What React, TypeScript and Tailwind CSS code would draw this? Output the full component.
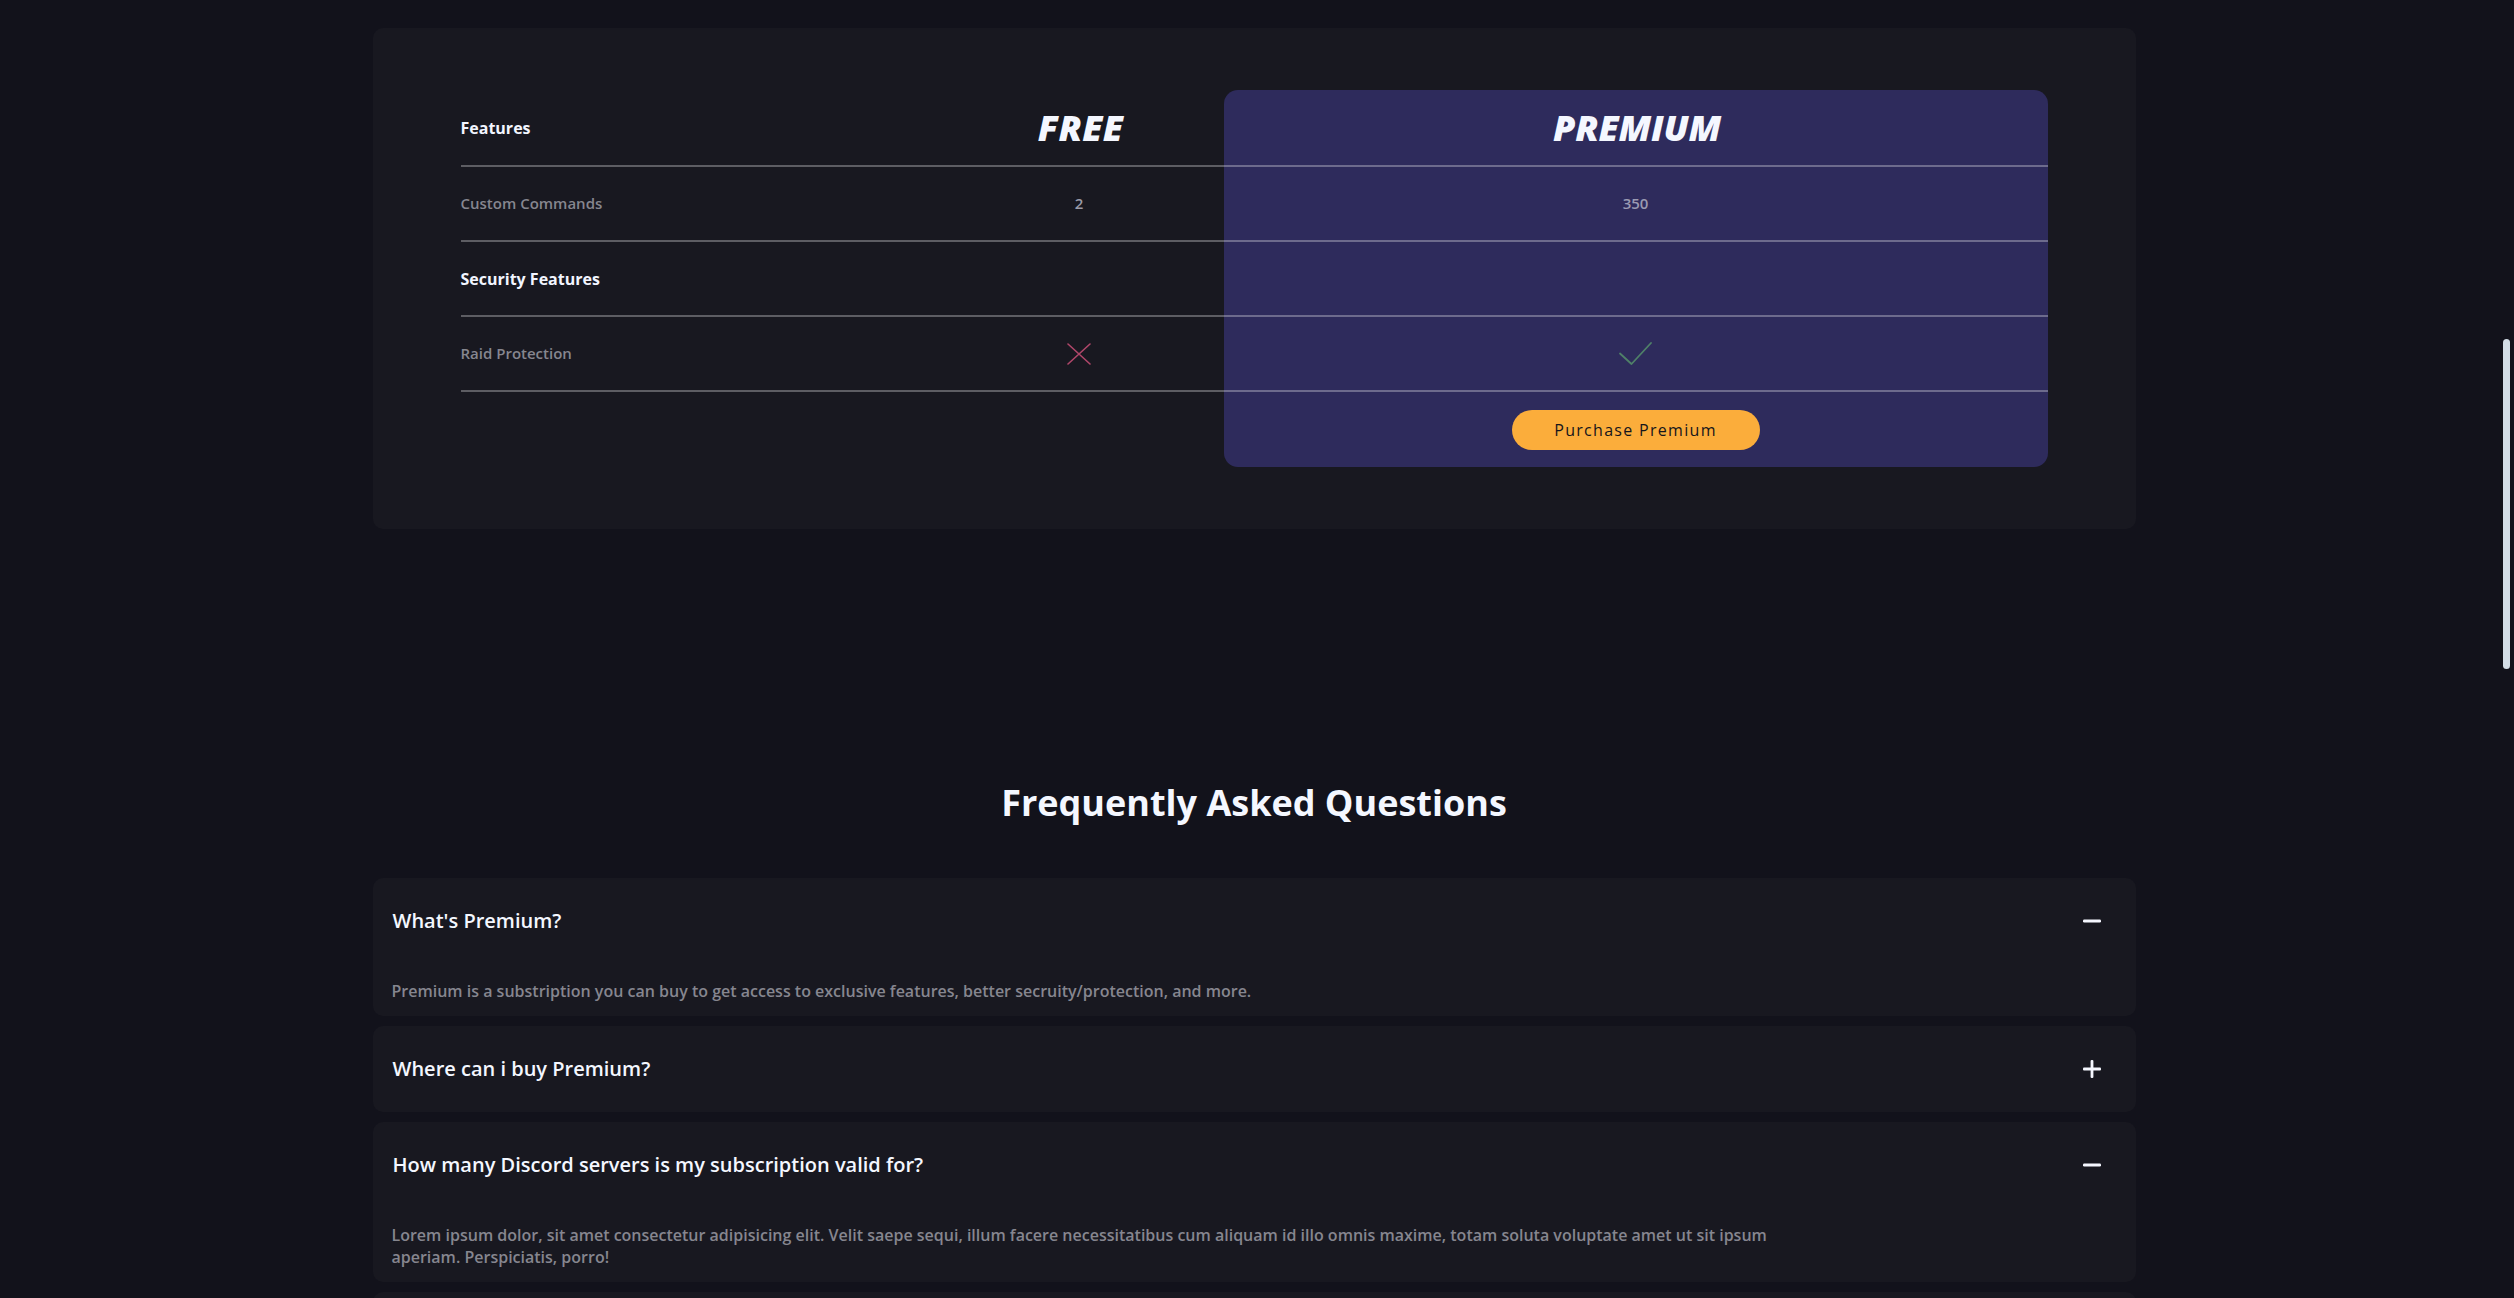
import React from "react";

const font = { fontFamily: '"Open Sans", "Noto Sans", sans-serif' };

function XMark() {
  return (
    <svg width="24" height="22" viewBox="0 0 24 22" fill="none">
      <path d="M1 1 L23 21 M23 1 L1 21" stroke="#b0476a" strokeWidth="1.6" strokeLinecap="round" />
    </svg>
  );
}

function CheckMark() {
  return (
    <svg width="33" height="23" viewBox="0 0 33 23" fill="none">
      <path d="M1 11.5 L12.5 22 L32 1" stroke="#4f8068" strokeWidth="1.8" strokeLinecap="round" strokeLinejoin="round" />
    </svg>
  );
}

function Minus() {
  return (
    <svg width="18" height="18" viewBox="0 0 18 18">
      <rect x="0" y="7.5" width="18" height="3" rx="1.2" fill="#f5f7ff" />
    </svg>
  );
}

function Plus() {
  return (
    <svg width="18" height="18" viewBox="0 0 18 18">
      <rect x="0" y="7.6" width="18" height="2.8" rx="1" fill="#f5f7ff" />
      <rect x="7.6" y="0" width="2.8" height="18" rx="1" fill="#f5f7ff" />
    </svg>
  );
}

const faqs = [
  {
    q: "What's Premium?",
    a: "Premium is a substription you can buy to get access to exclusive features, better secruity/protection, and more.",
    open: true,
  },
  { q: "Where can i buy Premium?", a: "", open: false },
  {
    q: "How many Discord servers is my subscription valid for?",
    a: "Lorem ipsum dolor, sit amet consectetur adipisicing elit. Velit saepe sequi, illum facere necessitatibus cum aliquam id illo omnis maxime, totam soluta voluptate amet ut sit ipsum aperiam. Perspiciatis, porro!",
    open: true,
  },
];

export default function App() {
  return (
    <div className="w-full h-[1298px] overflow-hidden bg-[#12121b]" style={font}>
      <div className="w-[2508px] pt-[28px] flex flex-col items-center">
        {/* Comparison card */}
        <div className="w-[1763px] rounded-[10px] bg-[#181820] px-[88px] py-[62px]">
          <div className="flex">
            {/* Column 1 */}
            <div className="w-[474px] flex flex-col">
              <div className="h-[77px] border-b-2 border-white/30 flex items-center text-[16px] font-bold text-[#f2f5ff]">
                Features
              </div>
              <div className="h-[75px] border-b-2 border-white/30 flex items-center text-[15px] font-semibold text-[#86868f]">
                Custom Commands
              </div>
              <div className="h-[75px] border-b-2 border-white/30 flex items-center text-[16px] font-bold text-[#f2f5ff]">
                Security Features
              </div>
              <div className="h-[75px] border-b-2 border-white/30 flex items-center text-[15px] font-semibold text-[#86868f]">
                Raid Protection
              </div>
            </div>
            {/* Column 2 */}
            <div className="w-[289px] flex flex-col">
              <div className="h-[77px] border-b-2 border-white/30 flex items-center justify-center pl-[3px] text-[36px] font-extrabold italic text-[#f4f7ff] tracking-[0.3px]">
                FREE
              </div>
              <div className="h-[75px] border-b-2 border-white/30 flex items-center justify-center text-[15px] font-semibold text-[#9a9aa8]">
                2
              </div>
              <div className="h-[75px] border-b-2 border-white/30" />
              <div className="h-[75px] border-b-2 border-white/30 flex items-center justify-center">
                <XMark />
              </div>
            </div>
            {/* Column 3 (premium) */}
            <div className="w-[824px] flex flex-col rounded-[14px] bg-[#2e2b5c]">
              <div className="h-[77px] border-b-2 border-white/30 flex items-center justify-center pl-[3px] text-[36px] font-extrabold italic text-[#f4f7ff] tracking-[-0.2px]">
                PREMIUM
              </div>
              <div className="h-[75px] border-b-2 border-white/30 flex items-center justify-center text-[15px] font-semibold text-[#9a9ab2]">
                350
              </div>
              <div className="h-[75px] border-b-2 border-white/30" />
              <div className="h-[75px] border-b-2 border-white/30 flex items-center justify-center">
                <CheckMark />
              </div>
              <div className="h-[75px] flex items-center justify-center">
                <button className="w-[248px] h-[40px] rounded-full bg-[#fbad3b] text-[16px] font-medium tracking-[1.3px] text-[#15151c]">
                  Purchase Premium
                </button>
              </div>
            </div>
          </div>
        </div>

        {/* FAQ */}
        <h2 className="mt-[250px] h-[48px] leading-[48px] text-[36px] font-bold text-[#f4f7ff]">
          Frequently Asked Questions
        </h2>
        <div className="mt-[51px] w-[1763px] flex flex-col gap-[10px]">
          {faqs.map((f, i) => (
            <div key={i} className="rounded-[10px] bg-[#181820]">
              <div className="h-[86px] flex items-center justify-between pl-[20px] pr-[35px]">
                <span className="text-[20px] font-semibold text-[#f4f7ff]">{f.q}</span>
                {f.open ? <Minus /> : <Plus />}
              </div>
              {f.open && (
                <div className="pl-[19px] pr-[20px] pt-[16px] pb-[14px]">
                  <p className="max-w-[1400px] text-[16px] leading-[22px] font-semibold text-[#86868f]">
                    {f.a}
                  </p>
                </div>
              )}
            </div>
          ))}
          <div className="h-[86px] rounded-[10px] bg-[#181820]" />
        </div>
      </div>
      <div className="fixed right-[4px] top-[339px] w-[7px] h-[330px] rounded-full bg-[#d3dde6]" />
    </div>
  );
}
